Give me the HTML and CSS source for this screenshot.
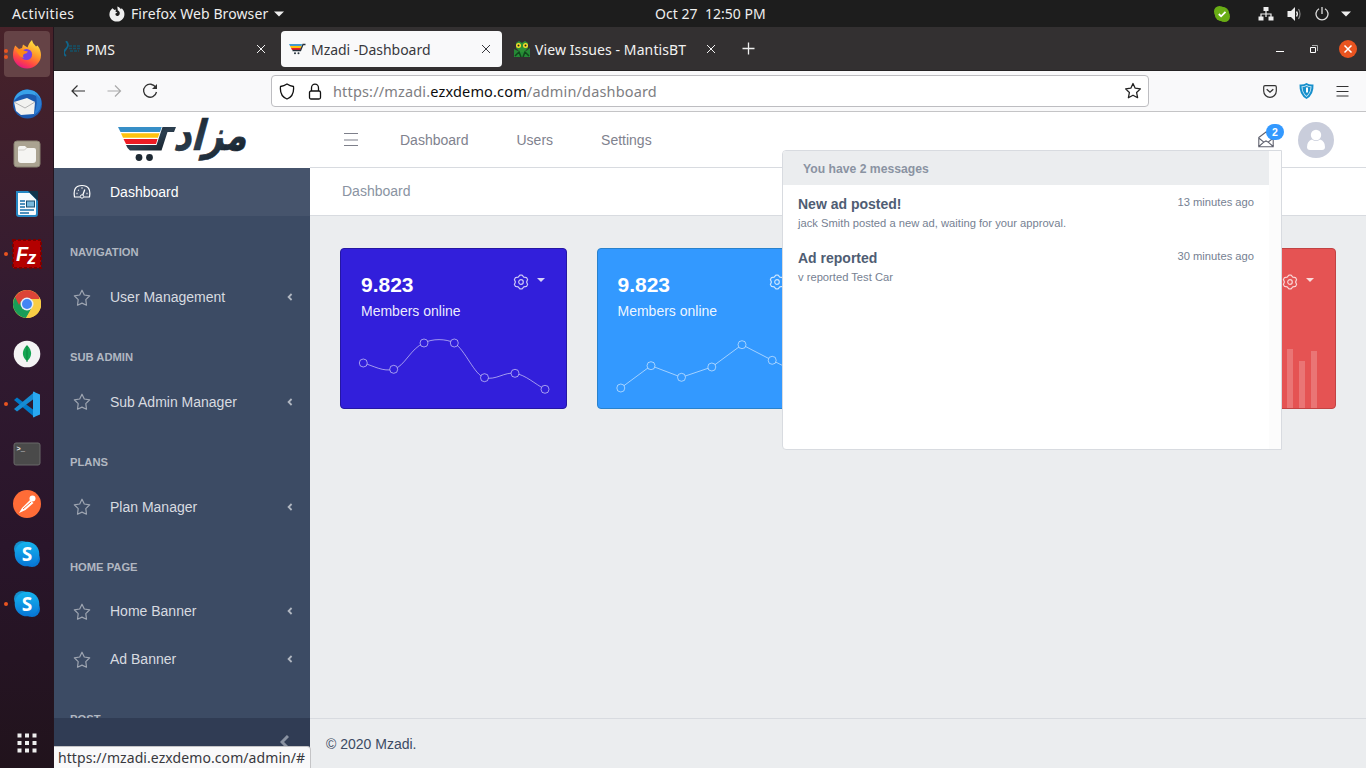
FILE: index.html
```html
<!DOCTYPE html>
<html lang="en">
<head>
<meta charset="utf-8">
<title>Mzadi -Dashboard</title>
<link rel="stylesheet" href="styles.css">
</head>
<body>
<svg class="defs" width="0" height="0">
  <defs>
    <symbol id="star" viewBox="0 0 18 18"><path d="M9 1.200 11.300 6l5.400.800-3.900 3.800.700 5.600L9 14.100l-4.500 2.100.700-5.600L1.300 6.800 6.700 6z" fill="none" stroke="currentColor" stroke-width="1.200" stroke-linejoin="round"/></symbol>
    <symbol id="x" viewBox="0 0 10 10"><path d="M1 1l8 8M9 1L1 9" fill="none" stroke="currentColor" stroke-width="1"/></symbol>
    <symbol id="chev" viewBox="0 0 6 8"><path d="M4.600 1 1.600 4l3 3" fill="none" stroke="currentColor" stroke-width="1.800"/></symbol>
    <symbol id="gear" viewBox="0 0 16 16"><path d="M6.900 1.100h2.200l1.700 2.050 2.700.4 1.100 1.900L13.600 8l1 2.550-1.100 1.900-2.700.4-1.700 2.050H6.900l-1.700-2.050-2.700-.4-1.100-1.900L2.400 8l-1-2.550 1.100-1.900 2.700-.4z" fill="none" stroke="currentColor" stroke-width="1.200" stroke-linejoin="round"/><circle cx="8" cy="8" r="2.300" fill="none" stroke="currentColor" stroke-width="1.200"/></symbol>
    <symbol id="skype" viewBox="0 0 28 28"><circle cx="9" cy="9" r="8" fill="#168fcd"/><circle cx="19" cy="19" r="8" fill="#0878d4"/><circle cx="14" cy="14" r="12.300" fill="url(#sky)"/></symbol>
    <linearGradient id="sky" x2="0" y2="1"><stop stop-color="#15b5ef"/><stop offset="1" stop-color="#0876d6"/></linearGradient>
    <linearGradient id="fox" x1=".8" y1="0" x2=".3" y2="1"><stop stop-color="#fff044"/><stop offset=".45" stop-color="#ff9528"/><stop offset=".75" stop-color="#ff4545"/><stop offset="1" stop-color="#e31587"/></linearGradient>
    <linearGradient id="ink" x2="1" y2="1"><stop stop-color="#101a22"/><stop offset=".5" stop-color="#2c3f50"/><stop offset="1" stop-color="#101a22"/></linearGradient>
  </defs>
</svg>
<div class="desktop">
  <header class="panel">
    <span class="activities">Activities</span>
    <svg class="panel-fox" width="16" height="16" viewBox="0 0 16 16"><path d="M3.400 2.200 5.600 4l1.500-.500-.700 2 2 1-1.900 1c-.600 2 1.400 3 2.800 2.200 2.400-1.300 1.700-4.500-.500-5.200L8.300.400c2 .500 3 1.800 3.600 2.900l.800-1c2 1.700 3 4.300 2.700 6.600-.500 3.900-3.600 6.700-7.400 6.700S.400 12.500.400 8.400c0-2.500 1-4.300 3-6.200z" fill="#eee"/></svg>
    <span class="appname">Firefox Web Browser</span>
    <svg width="10" height="6" viewBox="0 0 10 6"><path d="M0 .5h10L5 5.500z" fill="#eee"/></svg>
    <span class="clock">Oct 27&nbsp; 12:50 PM</span>
    <div class="tray">
      <svg width="16" height="16" viewBox="0 0 16 16"><circle cx="5.500" cy="5.500" r="5.500" fill="#69ad15"/><circle cx="10.500" cy="10.500" r="5.500" fill="#69ad15"/><circle cx="8" cy="8" r="7.300" fill="#69ad15"/><path d="m4.800 8 2.300 2.300 4.400-4.400" stroke="#fff" stroke-width="1.800" fill="none"/></svg>
      <svg class="net" width="16" height="14" viewBox="0 0 16 14"><path d="M8 4v6M3 10V7h10v3" stroke="#eee" fill="none" stroke-width="1.200"/><path d="M5.500 0h5v4h-5zM.5 9.500h5v4h-5zM10.500 9.500h5v4h-5z" fill="#eee"/></svg>
      <svg width="16" height="14" viewBox="0 0 16 14"><path d="M1.500 4H5l4-4v14l-4-4H1.500z" fill="#eee"/><path d="M10.500 4.500q1.800 2.500 0 5" stroke="#eee" fill="none" stroke-width="1.300"/><path d="M12.500 2q3 5 0 10" stroke="#888" fill="none" stroke-width="1.200"/></svg>
      <svg width="14" height="14" viewBox="0 0 14 14"><path d="M4 1.700a6 6 0 1 0 6 0M7 0v7" stroke="#ddd" fill="none" stroke-width="1.300"/></svg>
      <svg width="10" height="6" viewBox="0 0 10 6"><path d="M0 .5h10L5 5.500z" fill="#eee"/></svg>
    </div>
  </header>
  <div class="below">
    <aside class="dock">
      <div class="app active"><i class="dot two"></i>
        <svg width="30" height="30" viewBox="0 0 30 30"><path d="M3.200 6.500 7 10l3-1 1-3.500 4.500 3c1-3.500 2.500-5.500 4.500-7.500.5 3 2.500 4.500 4 6.500l1.500-1c2.500 3 3.500 6.500 3.500 9.500A14 13.500 0 0 1 1 16c0-4 1-7 2.200-9.500z" fill="url(#fox)"/><circle cx="14.500" cy="15.500" r="5.600" fill="#7542e5"/><path d="M4 11q5-2 9 1l3 .5q-1 2-4 2.500-2 2 0 4-5-1-8-8z" fill="#ff8a16"/></svg></div>
      <div class="app"><svg width="32" height="32" viewBox="0 0 32 32"><circle cx="16.500" cy="16" r="14.500" fill="#1c5bb0"/><path d="M3 13C4 4 14 0 19 2q9 1 11 11Q26 6 18 6 9 5 3 13z" fill="#39a1e8"/><path d="m3 14 13-4 8 4-1 12-13 1-5-4z" fill="#f2f2f0"/><path d="m3 14 11 6 10-6" fill="none" stroke="#b5b5b5"/><path d="M24 5q4 8-1 22 9-5 7-16z" fill="#2c7ed4"/></svg></div>
      <div class="app"><svg width="28" height="28" viewBox="0 0 28 28"><rect x="1" y="1" width="26" height="26" rx="3" fill="#aaa391" stroke="#898373"/><path d="M5 8q0-2 2-2h5l2 2h7q2 0 2 2v10q0 3-3 3H8q-3 0-3-3z" fill="#f5f5f2"/><path d="M5.500 10h6l2-2" stroke="#d0cec8" fill="none"/></svg></div>
      <div class="app"><svg width="26" height="28" viewBox="0 0 26 28"><path d="M3 2h13l7 7v15q0 2-2 2H5q-2 0-2-2z" fill="#f8fbfd" stroke="#2587c3" stroke-width="2"/><path d="M14 1h10v10z" fill="#11344d"/><path d="M6 11h5M6 14h5M6 17h5M6 20h14M6 23h9" stroke="#166fa8" stroke-width="1.400"/><rect x="12.500" y="11" width="8" height="6" fill="#78b8dc" stroke="#174f72"/></svg></div>
      <div class="app"><i class="dot"></i><svg width="30" height="30" viewBox="0 0 30 30"><rect x="1" y="1" width="28" height="28" fill="#b30000" stroke="#7a0000" stroke-width="2" stroke-dasharray="3 2"/><text x="4" y="22" class="fz">F<tspan class="z" dx="-1" dy="3">z</tspan></text></svg></div>
      <div class="app"><svg width="28" height="28" viewBox="0 0 28 28"><circle cx="14" cy="14" r="14" fill="#f9cd45"/><path d="M14 14H26L14 7 2 7q-4 8 0 14 4 6 11 7l6-11z" fill="#189d58"/><path d="M14 7h12.200Q31 15 25 23q-4 5-12 5l7-11z" fill="#f9cd45"/><path d="M2 7a14 14 0 0 1 24.200 0v2H14q-6 0-8 6z" fill="#dc4437"/><circle cx="14" cy="14" r="6.500" fill="#e7edf7"/><circle cx="14" cy="14" r="5" fill="#4285f4"/></svg></div>
      <div class="app"><svg width="28" height="28" viewBox="0 0 28 28"><circle cx="14" cy="14" r="13.300" fill="#f4f4f4"/><path d="M14 5c6 6 5 12 0 16-5-4-6-10 0-16z" fill="#15a653"/><path d="M14 6v16" stroke="#0a8541"/></svg></div>
      <div class="app"><i class="dot"></i><svg width="26" height="27" viewBox="0 0 26 27"><path d="m0 9 3-2.500L21 20v6.500z" fill="#0079c8"/><path d="m0 18 3 2.500L21 7V.500z" fill="#168bd2"/><path d="m19 .500 7 3v20l-7 3z" fill="#29a9f2"/></svg></div>
      <div class="app"><svg width="28" height="24" viewBox="0 0 28 24"><rect x="1" y="1" width="26" height="22" rx="2" fill="#4a4a4a" stroke="#686868"/><text x="3.500" y="9" class="prompt">&gt;_</text></svg></div>
      <div class="app"><svg width="28" height="28" viewBox="0 0 28 28"><circle cx="14" cy="14" r="14" fill="#ff6c37"/><path d="m6 23 3-5 8-8 3.500 3-8 7z" fill="#fff"/><circle cx="19.500" cy="8.500" r="3" fill="#fff"/><path d="m10 19 8-7" stroke="#ff6c37" fill="none"/></svg></div>
      <div class="app"><svg width="28" height="28" viewBox="0 0 28 28"><use href="#skype"/><text x="14" y="20.500" class="skype-s">S</text></svg></div>
      <div class="app"><i class="dot"></i><svg width="28" height="28" viewBox="0 0 28 28"><use href="#skype"/><text x="14" y="20.500" class="skype-s">S</text></svg></div>
      <svg class="grid-icon" width="20" height="20" viewBox="0 0 20 20"><path d="M.5 2.500h4m3.500 0h4m3.500 0h4M.5 10h4m3.500 0h4m3.500 0h4M.5 17.500h4m3.500 0h4m3.500 0h4" stroke="#eee" stroke-width="4"/></svg>
    </aside>
    <main class="window">
      <div class="tabs">
        <div class="tab first">
          <svg width="17" height="16" viewBox="0 0 17 16"><path d="M2 0q4 4 0 8t0 7" fill="none" stroke="#11658a" stroke-width="1.800"/><path d="M5 5h11M5 7.500h11M6 10h9" stroke="#155168" stroke-width="1.500" stroke-dasharray="3 1"/></svg>
          <span>PMS</span><svg class="close" width="10" height="10"><use href="#x"/></svg></div>
        <div class="tab current">
          <svg width="17" height="12" viewBox="0 0 17 12"><path d="M0 1h13l-.5 2H1z" fill="#449bd0"/><path d="M1 3h11.500L12 5H2z" fill="#ffc20e"/><path d="M2 5h10l-.5 2H3z" fill="#ed1c24"/><path d="M3.500 7.500h8L14 1.500h2.500" fill="none" stroke="#26313c" stroke-width="1.300"/><circle cx="6" cy="10.300" r="1" fill="#26313c"/><circle cx="9.500" cy="10.300" r="1" fill="#26313c"/></svg>
          <span>Mzadi -Dashboard</span><svg class="close" width="10" height="10"><use href="#x"/></svg></div>
        <div class="tab third">
          <svg width="16" height="16" viewBox="0 0 16 16"><path d="M0 8l4 2 4-2 4 2 4-3v9H0z" fill="#258a35"/><path d="M2 2 5 0l3 2 3-2 3 2v5l-4 4H6L2 7z" fill="#2c9235"/><circle cx="4.500" cy="4.500" r="2.500" fill="#f7dc2c"/><circle cx="11.500" cy="4.500" r="2.500" fill="#f7dc2c"/><circle cx="4.500" cy="4.500" r="1" fill="#222"/><circle cx="11.500" cy="4.500" r="1" fill="#222"/><path d="m1 15 4-4 2 5m2 0 2-5 4 4" fill="none" stroke="#11451c" stroke-width="1.500"/></svg>
          <span>View Issues - MantisBT</span><svg class="close" width="10" height="10"><use href="#x"/></svg></div>
        <svg class="plus" width="13" height="13" viewBox="0 0 13 13"><path d="M6.500 .5v12M.5 6.500h12" stroke="#eee" stroke-width="1.300"/></svg>
        <div class="controls">
          <svg width="8" height="8" viewBox="0 0 8 8"><path d="M0 6.500h8" stroke="#fff"/></svg>
          <svg width="8" height="8" viewBox="0 0 8 8"><path d="M.5 2.500h5v5h-5z" fill="none" stroke="#fff"/><path d="M2 .5h5.500V6" fill="none" stroke="#aaa"/></svg>
          <svg width="18" height="18" viewBox="0 0 18 18"><circle cx="9" cy="9" r="9" fill="#e95420"/><path d="m5.500 5.500 7 7m0-7-7 7" stroke="#fff" stroke-width="1.500"/></svg>
        </div>
      </div>
      <div class="toolbar">
        <div class="navbtns">
          <svg width="15" height="14" viewBox="0 0 15 14"><path d="M14 7H1M6.500 1.500 1 7l5.500 5.500" fill="none" stroke="#333" stroke-width="1.200"/></svg>
          <svg width="15" height="14" viewBox="0 0 15 14"><path d="M.5 7H13.500M8 1.500 13.500 7 8 12.500" fill="none" stroke="#aaa" stroke-width="1.200"/></svg>
          <svg width="16" height="16" viewBox="0 0 16 16"><path d="M13.800 4.500A6.500 6.500 0 1 0 14.500 9" fill="none" stroke="#333" stroke-width="1.300"/><path d="M15 1v5H10z" fill="#333"/></svg>
        </div>
        <div class="urlbar">
          <svg width="16" height="17" viewBox="0 0 16 17"><path d="M8 1q3 2 6.500 2.500Q15.500 13 8 16 .5 13 1.500 3.500 5 3 8 1z" fill="none" stroke="#111" stroke-width="1.300" stroke-linejoin="round"/></svg>
          <svg width="14" height="17" viewBox="0 0 14 17"><rect x="1.500" y="8" width="11" height="8" rx="1.500" fill="none" stroke="#111" stroke-width="1.300"/><path d="M3.500 8V5a3.500 3.800 0 0 1 7 0v3" fill="none" stroke="#111" stroke-width="1.300"/></svg>
          <span class="url">https://mzadi.<b>ezxdemo.com</b>/admin/dashboard</span>
          <svg class="bookmark" width="18" height="18" viewBox="0 0 18 18"><path d="M9 1.500 11.200 6.200l5.200.700-3.800 3.600 1 5.200L9 13.200l-4.600 2.500 1-5.200L1.600 6.900l5.200-.700z" fill="none" stroke="#222" stroke-width="1.300" stroke-linejoin="round"/></svg>
        </div>
        <div class="extras">
          <svg width="14" height="13" viewBox="0 0 14 13"><path d="M2 .7h10q1.300 0 1.300 1.300v4a6.300 6.300 0 0 1-12.600 0V2Q.7.700 2 .700z" fill="none" stroke="#333" stroke-width="1.200"/><path d="m3.700 4.200 3.300 3 3.300-3" fill="none" stroke="#333" stroke-width="1.300"/></svg>
          <svg width="15" height="16" viewBox="0 0 15 16"><path d="M7.500 0q3 2 7 1.500Q15 12 7.500 16 0 12 .5 1.500 4.500 2 7.500 0z" fill="#1790cc"/><path d="M7.500 2q2.500 1.500 5 1.300Q12.500 10 7.500 14 2.500 10 2.500 3.300 5 3.500 7.500 2z" fill="#d4ecf7"/><path d="M7.500 3q2 1 4 1Q11.500 9.500 7.500 13 3.500 9.500 3.500 4q2 0 4-1z" fill="#1790cc"/><path d="M7 4.500h2v5H7z" fill="#fff"/></svg>
          <svg width="13" height="11" viewBox="0 0 13 11"><path d="M.5 .5h12M.5 5.500h12M.5 10h12" stroke="#333" stroke-width="1.200"/></svg>
        </div>
      </div>
      <div class="page">
        <nav class="sidebar">
          <div class="brand">
            <svg width="134" height="46" viewBox="0 0 134 46"><path d="M0 8h43.700L42 13H2.500z" fill="#378fc7"/><path d="M3 14.200h38.500l-1.600 4.600H5z" fill="#ffc20e"/><path d="M5.500 20h34L38 25H8z" fill="#ed1c24"/><path d="M8 26h30.500L44.500 8H58l-2 5h-6.500L43.500 31.500H12q-2.500-1.500-4-5.500z" fill="url(#ink)"/><circle cx="21" cy="38.500" r="3.400" fill="#1d2933"/><circle cx="31.500" cy="38.500" r="3.400" fill="#1d2933"/><text transform="translate(55 31) skewX(-15) scale(1 1.170)" x="0" y="0" textLength="73" lengthAdjust="spacingAndGlyphs" class="word">مزاد</text></svg>
          </div>
          <div class="scroll">
            <div class="link on"><svg class="speed" width="18" height="16" viewBox="0 0 18 16"><path d="M7 13H1.500Q-.5 1.500 9 1.500t7.500 11.500H11" fill="none" stroke="currentColor" stroke-width="1.200"/><circle cx="9" cy="12.500" r="1.700" fill="none" stroke="currentColor"/><path d="m9.800 11 2-5.500M3.500 9.500h1M5 6l.8.600M8.500 4h1M13.500 9.500h1" fill="none" stroke="currentColor" stroke-width="1.300"/></svg><span>Dashboard</span></div>
            <div class="title nudge">NAVIGATION</div>
            <div class="link"><svg width="18" height="18"><use href="#star"/></svg><span>User Management</span><svg class="arrow" width="6" height="8"><use href="#chev"/></svg></div>
            <div class="title">SUB ADMIN</div>
            <div class="link"><svg width="18" height="18"><use href="#star"/></svg><span>Sub Admin Manager</span><svg class="arrow" width="6" height="8"><use href="#chev"/></svg></div>
            <div class="title">PLANS</div>
            <div class="link"><svg width="18" height="18"><use href="#star"/></svg><span>Plan Manager</span><svg class="arrow" width="6" height="8"><use href="#chev"/></svg></div>
            <div class="title">HOME PAGE</div>
            <div class="link"><svg width="18" height="18"><use href="#star"/></svg><span>Home Banner</span><svg class="arrow" width="6" height="8"><use href="#chev"/></svg></div>
            <div class="link"><svg width="18" height="18"><use href="#star"/></svg><span>Ad Banner</span><svg class="arrow" width="6" height="8"><use href="#chev"/></svg></div>
            <div class="title">POST</div>
          </div>
          <div class="minimizer"><svg width="9" height="14" viewBox="0 0 9 14"><path d="M8 1 2 7l6 6" fill="none" stroke="#8a93a2" stroke-width="3"/></svg></div>
          <div class="status">https://mzadi.ezxdemo.com/admin/#</div>
        </nav>
        <section class="content">
          <div class="appbar">
            <svg class="burger" width="14" height="14" viewBox="0 0 14 14"><path d="M0 .5h14M0 7h14M0 12.500h14" stroke="#7d7f8a" stroke-width="1.100"/></svg>
            <span>Dashboard</span><span>Users</span><span>Settings</span>
            <div class="user">
              <div class="mail"><svg width="16" height="17" viewBox="0 0 16 17"><path d="M.8 6.500 8 1l7.200 5.500v9.200H.8zM.8 7l5 4.200L8 10l2.200 1.200 5-4.200M.8 15.500l5-4.300m9.400 4.300-5-4.300" fill="none" stroke="#60626f" stroke-width="1.100"/></svg><span class="badge">2</span></div>
              <svg class="avatar" width="36" height="36" viewBox="0 0 36 36"><circle cx="18" cy="18" r="18" fill="#c9cddb"/><circle cx="18" cy="13" r="5.200" fill="#fff"/><path d="M9 25q0-6 5-7.500 4 3 8 0 5 1.500 5 7.500 0 3-3 3H12q-3 0-3-3z" fill="#fff"/></svg>
            </div>
          </div>
          <div class="crumbs">Dashboard</div>
          <div class="cards">
            <div class="card primary">
              <div class="card-top"><div><strong>9.823</strong><p>Members online</p></div><div class="tools"><svg width="16" height="16"><use href="#gear"/></svg><i></i></div></div>
              <svg class="chart" height="80" viewBox="0 0 225 80"><path class="line" d="M22.300 35C33 38 42 44 52.700 41.300S70 20 83 15c8-4.500 22-4.500 30.300 0 11 7 20 32 30.200 34.700 11 3 20-6 30.500-4.400S194 56 204 61.300"/><g><circle cx="22.300" cy="35" r="4"/><circle cx="52.700" cy="41.300" r="4"/><circle cx="83" cy="15" r="4"/><circle cx="113.300" cy="15" r="4"/><circle cx="143.500" cy="49.700" r="4"/><circle cx="174" cy="45.300" r="4"/><circle cx="204" cy="61.300" r="4"/></g></svg>
            </div>
            <div class="card info">
              <div class="card-top"><div><strong>9.823</strong><p>Members online</p></div><div class="tools"><svg width="16" height="16"><use href="#gear"/></svg><i></i></div></div>
              <svg class="chart" height="80" viewBox="0 0 225 80"><path class="line" d="M22.800 60 53 37.700l30.500 11.600 30.300-10.300L144 16.700l30.200 15.600 30 15"/><g><circle cx="22.800" cy="60" r="4"/><circle cx="53" cy="37.700" r="4"/><circle cx="83.500" cy="49.300" r="4"/><circle cx="113.800" cy="39" r="4"/><circle cx="144" cy="16.700" r="4"/><circle cx="174.200" cy="32.300" r="4"/></g></svg>
            </div>
            <div class="card warning"></div>
            <div class="card danger">
              <div class="card-top"><div></div><div class="tools"><svg width="16" height="16"><use href="#gear"/></svg><i></i></div></div>
              <svg class="chart" height="80" viewBox="0 0 225 80"><path d="M176 21h6v59h-6zM188 33h6v47h-6zM200 23h6v57h-6z" fill="#fff" fill-opacity=".2"/></svg>
            </div>
          </div>
          <footer>© 2020 Mzadi.</footer>
          <div class="dropdown">
            <div class="messages">
              <div class="dd-head">You have 2 messages</div>
              <div class="msg"><div class="row"><strong>New ad posted!</strong><small>13 minutes ago</small></div><p>jack Smith posted a new ad, waiting for your approval.</p></div>
              <div class="msg"><div class="row"><strong>Ad reported</strong><small>30 minutes ago</small></div><p>v reported Test Car</p></div>
            </div>
            <div class="gutter"></div>
          </div>
        </section>
      </div>
    </main>
  </div>
</div>
</body>
</html>
```

FILE: styles.css
```css
* { box-sizing: border-box; }
body { margin: 0; overflow: hidden; font-family: "Liberation Sans", Arial, sans-serif; font-size: 14px; line-height: 21px; color: #3c4b64; }
svg { display: block; flex: none; }
p { margin: 0; }
.defs { position: absolute; }
.desktop { width: 1366px; height: 768px; display: flex; flex-direction: column; }
.panel, .tabs, .url, .status { font-family: "Noto Sans", sans-serif; }
.panel { height: 27px; flex: none; display: flex; align-items: center; background: #1d1d1d; color: #eee; padding: 0 15px 0 12px; font-size: 14px; }
.activities { width: 97px; letter-spacing: .4px; white-space: nowrap; }
.panel-fox { margin-right: 6px; }
.appname { width: 138px; margin-right: 5px; white-space: nowrap; letter-spacing: .1px; }
.clock { margin-left: 371px; padding-bottom: 1px; font-size: 14px; white-space: nowrap; letter-spacing: .03px; }
.tray { margin-left: auto; display: flex; align-items: center; gap: 12.500px; }
.net { margin-left: 15px; }
.below { flex: 1; min-height: 0; display: flex; }
.dock { width: 54px; flex: none; display: flex; flex-direction: column; align-items: center; padding-top: 2px; background: linear-gradient(#482229, #321b31 38%, #29152a 70%, #21131c); border-right: 1px solid #24151f; }
.app { width: 54px; height: 50px; flex: none; display: flex; align-items: center; justify-content: center; position: relative; }
.app.active { width: 46px; height: 46px; margin: 2px 0; border-radius: 4px; background: #654346; }
.dot { position: absolute; left: 4px; top: 23px; width: 4px; height: 4px; border-radius: 50%; background: #e95420; }
.dot.two { left: 0; top: 18px; box-shadow: 0 6px #e95420; }
.fz { font: italic bold 20px "Liberation Sans", sans-serif; fill: #fff; }
.z { font-size: 18px; }
.prompt { font: bold 7px "Liberation Mono", monospace; fill: #eee; }
.skype-s { font: bold 19px "Open Sans", sans-serif; fill: #fff; text-anchor: middle; }
.grid-icon { margin-top: 104px; }
.window { width: 1312px; display: flex; flex-direction: column; }
.tabs { height: 44px; flex: none; display: flex; align-items: center; background: #333031; border-bottom: 1px solid #242223; color: #f2f2f2; font-size: 14px; padding-right: 9px; }
.tab { display: flex; align-items: center; height: 36px; padding-left: 8px; border-radius: 4px; }
.tab span { margin-left: 5px; padding-top: 1px; white-space: nowrap; letter-spacing: .1px; }
.tab .close { margin-left: auto; }
.first { width: 227px; padding-left: 10px; padding-right: 15px; }
.current { width: 221px; padding-right: 11px; background: #f9f9fa; color: #38383d; }
.tab.current span { letter-spacing: -.03px; }
.third { width: 222px; padding-left: 12px; padding-right: 8px; }
.plus { margin-left: 18px; }
.controls { margin-left: auto; display: flex; align-items: center; gap: 26px; }
.controls svg:last-child { margin-left: -5px; }
.toolbar { height: 41px; flex: none; display: flex; align-items: center; background: #f9f9fa; border-bottom: 1px solid #c4c4c6; padding: 0 17px 0 17px; }
.navbtns { width: 200px; display: flex; align-items: center; gap: 20.500px; }
.urlbar { width: 878px; height: 32px; display: flex; align-items: center; border: 1px solid #bdbdc1; border-radius: 4px; background: #fff; padding: 0 6px 0 7px; }
.urlbar svg + svg { margin-left: 13px; }
.url { margin-left: 11px; font-size: 14.500px; letter-spacing: .16px; color: #7e7e82; white-space: nowrap; }
.url b { font-weight: 400; color: #0c0c0d; }
.urlbar .bookmark { margin-left: auto; }
.extras { margin-left: auto; display: flex; align-items: center; gap: 22px; }
.page { flex: 1; min-height: 0; display: flex; }
.sidebar { width: 256px; flex: none; display: flex; flex-direction: column; background: #3c4b64; position: relative; }
.brand { height: 56px; flex: none; background: #fff; padding: 7px 0 0 64px; }
.word { font-family: "DejaVu Sans", sans-serif; font-weight: 700; font-size: 36px; fill: url(#ink); stroke: #1b2833; stroke-width: .6px; }
.brand svg { overflow: visible; }
.scroll { flex: 1; min-height: 0; overflow: hidden; }
.link { height: 48px; display: flex; align-items: center; padding: 1.200px 17px 0 19px; color: #d8dbe0; }
.link svg { color: #9ea5b1; }
.link span { margin-left: 19px; }
.link .arrow { margin: -1px 0 0 auto; color: #b1b7c1; }
.link.on { background: #46546c; color: #fff; padding-top: 0; }
.link.on svg { color: #fff; }
.title { margin-top: 16px; padding: 12px 16px; font-size: 11.200px; line-height: 16.800px; font-weight: 700; color: #b1b7c1; }
.title.nudge { margin-top: 16.200px; }
.minimizer { height: 50px; flex: none; display: flex; justify-content: flex-end; background: #303c54; padding: 17px 21px 0 0; }
.status { position: absolute; left: 0; bottom: 0; width: 257px; height: 22px; background: #f9f9fa; border: 1px solid #c4c4c6; border-width: 1px 1px 0 0; border-radius: 0 4px 0 0; padding-left: 4px; color: #38383d; font-size: 14px; letter-spacing: .08px; line-height: 21px; white-space: nowrap; z-index: 1; }
.content { width: 1056px; display: flex; flex-direction: column; background: #ebedef; position: relative; }
.appbar { height: 56px; flex: none; display: flex; align-items: center; background: #fff; border-bottom: 1px solid #d8dbe0; color: #7f828e; padding: 0 32px 0 34px; }
.appbar > span { margin-right: 48px; padding-top: 1px; }
.burger { margin-right: 42px; }
.user { margin-left: auto; display: flex; align-items: center; gap: 24px; }
.mail { position: relative; }
.badge { position: absolute; left: 8px; top: -7px; width: 18px; height: 16px; border-radius: 8px; background: #39f; color: #fff; font-size: 10.500px; font-weight: 700; line-height: 16px; text-align: center; }
.crumbs { height: 48px; flex: none; background: #fff; border-bottom: 1px solid #d8dbe0; padding: 13px 32px; color: #8a93a2; }
.cards { flex: 1; display: grid; grid-template-columns: repeat(4, 1fr); column-gap: 30px; align-items: start; padding: 32px 30px 0; }
.card { height: 161px; display: flex; flex-direction: column; justify-content: space-between; border: 1px solid; border-radius: 4px; color: #fff; overflow: hidden; }
.primary { background: #321fdb; border-color: #2517a3; }
.info { background: #39f; border-color: #2982cc; }
.warning { background: #f9b115; border-color: #c98b00; }
.danger { background: #e55353; border-color: #c24343; }
.card-top { display: flex; justify-content: space-between; padding: 23px 21px 0 20px; }
.card strong { display: block; font-size: 21px; line-height: 25px; }
.card p { line-height: 21px; margin-top: 4px; color: rgba(255, 255, 255, .93); }
.tools { display: flex; align-items: flex-start; gap: 8px; color: rgba(255, 255, 255, .75); padding-top: 2px; }
.tools i { margin-top: 4px; border: 4.200px solid transparent; border-top-color: #fff; border-bottom: 0; opacity: .8; }
.chart { width: 225px; }
.chart circle, .line { stroke: rgba(255, 255, 255, .55); stroke-width: 1; fill: none; }
.primary .chart circle { fill: #321fdb; }
.info .chart circle { fill: #39f; }
footer { height: 50px; flex: none; border-top: 1px solid #d8dbe0; padding: 15px 16px; }
.dropdown { position: absolute; left: 472px; top: 38px; width: 500px; height: 300px; display: flex; background: #fff; border: 1px solid #d8dbe0; border-radius: 4px 0 0 4px; overflow: hidden; }
.messages { flex: 1; }
.gutter { width: 12px; background: #fcfcfc; }
.dd-head { height: 34px; background: #ebedef; color: #8a93a2; font-weight: 700; font-size: 12.200px; line-height: 36px; padding-left: 20px; }
.msg { height: 54px; padding: 9px 15px 0; }
.row { display: flex; justify-content: space-between; line-height: 21px; }
.row strong { color: #4f5d73; }
.row small { font-size: 11.200px; line-height: 17px; color: #768192; }
.msg p { font-size: 11.200px; line-height: 17px; color: #768192; }
```
